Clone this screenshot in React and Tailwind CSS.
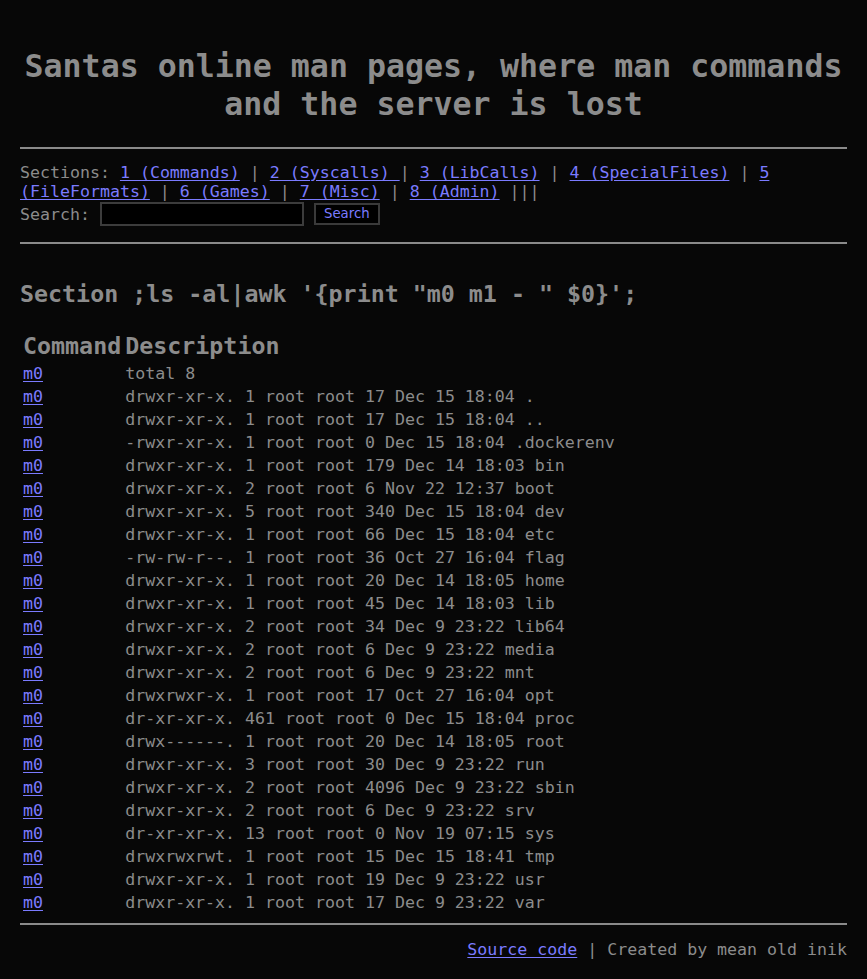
import React from 'react'

const rows = [
  'total 8',
  'drwxr-xr-x. 1 root root 17 Dec 15 18:04 .',
  'drwxr-xr-x. 1 root root 17 Dec 15 18:04 ..',
  '-rwxr-xr-x. 1 root root 0 Dec 15 18:04 .dockerenv',
  'drwxr-xr-x. 1 root root 179 Dec 14 18:03 bin',
  'drwxr-xr-x. 2 root root 6 Nov 22 12:37 boot',
  'drwxr-xr-x. 5 root root 340 Dec 15 18:04 dev',
  'drwxr-xr-x. 1 root root 66 Dec 15 18:04 etc',
  '-rw-rw-r--. 1 root root 36 Oct 27 16:04 flag',
  'drwxr-xr-x. 1 root root 20 Dec 14 18:05 home',
  'drwxr-xr-x. 1 root root 45 Dec 14 18:03 lib',
  'drwxr-xr-x. 2 root root 34 Dec 9 23:22 lib64',
  'drwxr-xr-x. 2 root root 6 Dec 9 23:22 media',
  'drwxr-xr-x. 2 root root 6 Dec 9 23:22 mnt',
  'drwxrwxr-x. 1 root root 17 Oct 27 16:04 opt',
  'dr-xr-xr-x. 461 root root 0 Dec 15 18:04 proc',
  'drwx------. 1 root root 20 Dec 14 18:05 root',
  'drwxr-xr-x. 3 root root 30 Dec 9 23:22 run',
  'drwxr-xr-x. 2 root root 4096 Dec 9 23:22 sbin',
  'drwxr-xr-x. 2 root root 6 Dec 9 23:22 srv',
  'dr-xr-xr-x. 13 root root 0 Nov 19 07:15 sys',
  'drwxrwxrwt. 1 root root 15 Dec 15 18:41 tmp',
  'drwxr-xr-x. 1 root root 19 Dec 9 23:22 usr',
  'drwxr-xr-x. 1 root root 17 Dec 9 23:22 var',
]

// the Syscalls link carries its own trailing space, so its separator has none before the bar
const sections = [
  ['1 (Commands)', ' | '],
  ['2 (Syscalls) ', '| '],
  ['3 (LibCalls)', ' | '],
  ['4 (SpecialFiles)', ' | '],
  ['5 (FileFormats)', ' | '],
  ['6 (Games)', ' | '],
  ['7 (Misc)', ' | '],
  ['8 (Admin)', ' |||'],
]

const link = 'text-[#7b7bff] underline underline-offset-2'

function Rule() {
  return <div className="h-[2px] bg-[#8a8a8a]" />
}

export default function App() {
  return (
    <div className="min-h-screen bg-[#070707] text-[#8c8c8c] font-['DejaVu_Sans_Mono',monospace] text-[16.6px] leading-[19px]">
      <div className="px-[20px] pt-[48px] pb-[20px]">
        {/* Header */}
        <h1 className="text-center font-bold text-[31.6px] leading-[37.5px]">
          Santas online man pages, where man commands and the server is lost
        </h1>

        <div className="mt-[24px]">
          <Rule />
        </div>

        {/* Nav */}
        <div className="mt-[14px]">
          Sections:{' '}
          {sections.map(([s, sep]) => (
            <React.Fragment key={s}>
              <a href="#" className={link}>
                {s}
              </a>
              {sep}
            </React.Fragment>
          ))}
        </div>
        <div className="flex items-center h-[26px]">
          <span>Search:</span>
          <input className="ml-[10px] w-[204px] h-[24px] border-2 border-[#3c3c3c] bg-black" />
          <button className="ml-[10px] h-[22px] px-[8px] border-2 border-[#3a3a3a] bg-black text-[#7b7bff] font-['DejaVu_Sans',sans-serif] text-[13.3px] leading-[16px]">
            Search
          </button>
        </div>

        <div className="mt-[15px]">
          <Rule />
        </div>

        {/* Listing */}
        <h2 className="mt-[36px] font-bold text-[23.3px] leading-[27px]">
          Section ;ls -al|awk '{'{'}print "m0 m1 - " $0{'}'}';
        </h2>

        <table className="mt-[22px] border-separate border-spacing-[2px]">
          <thead>
            <tr>
              <th className="p-[1px] text-left font-bold text-[23.3px] leading-[28px]">Command</th>
              <th className="p-[1px] text-left font-bold text-[23.3px] leading-[28px]">Description</th>
            </tr>
          </thead>
          <tbody>
            {rows.map((r, i) => (
              <tr key={i}>
                <td className="p-[1px] leading-[19px]">
                  <a href="#" className={link}>m0</a>
                </td>
                <td className="p-[1px] leading-[19px] whitespace-pre">{r}</td>
              </tr>
            ))}
          </tbody>
        </table>

        <div className="mt-[8px]">
          <Rule />
        </div>

        {/* Footer */}
        <div className="mt-[15px] text-right">
          <a href="#" className={link}>Source code</a> | Created by mean old inik
        </div>
      </div>
    </div>
  )
}
